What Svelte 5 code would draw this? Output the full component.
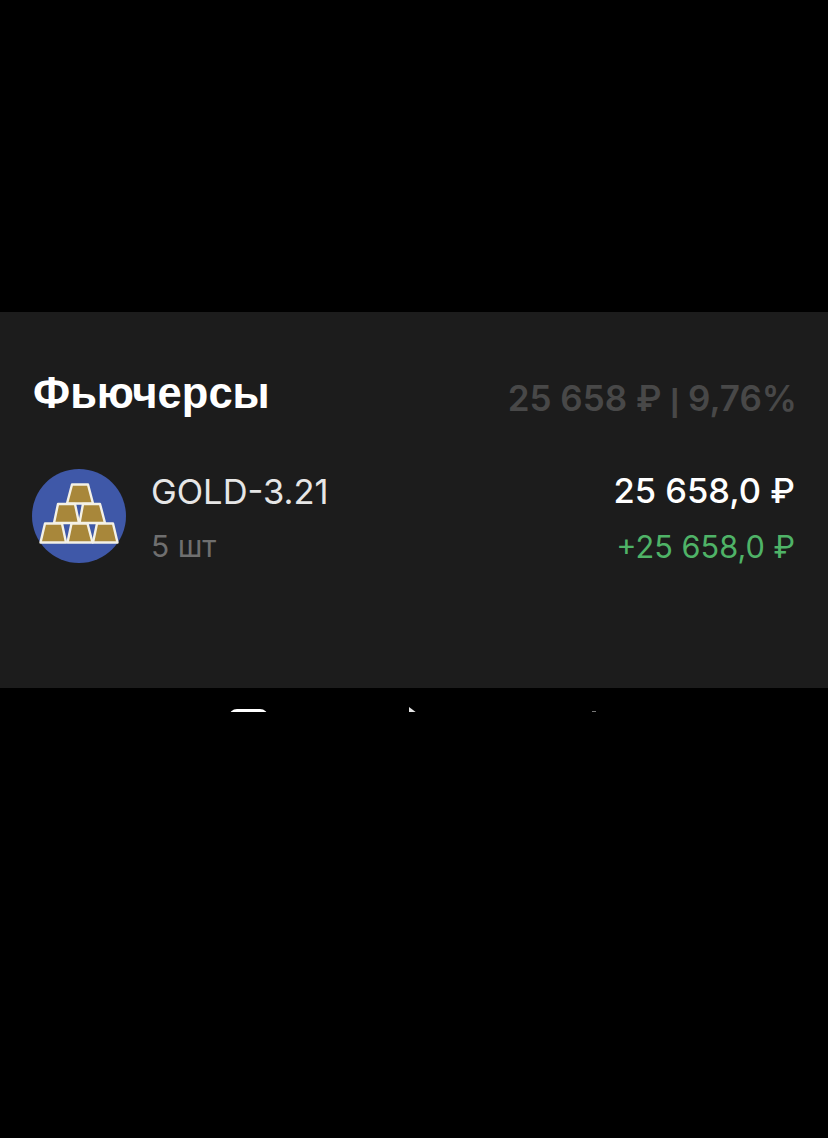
<script>
	const position = {
		ticker: 'GOLD-3.21',
		amount: '5 шт',
		value: '25 658,0 ₽',
		profit: '+25 658,0 ₽'
	};
</script>

<div class="screen">
	<section class="panel">
		<header class="head">
			<h2>Фьючерсы</h2>
			<span class="total">25 658 ₽ <span class="pipe">|</span> 9,76%</span>
		</header>
		<div class="row">
			<svg class="logo" viewBox="0 0 94 94" aria-hidden="true">
				<circle cx="47" cy="47" r="47" fill="#3f58a8" />
				<g fill="#a8873a" stroke="#f4f1e6" stroke-width="2.4" stroke-linejoin="round">
					<path d="M40 15.500 H56 L61 34.500 H35 Z" />
					<path d="M26 35 H43 L47 54 H22 Z" />
					<path d="M51 35 H68 L73 54 H47.500 Z" />
					<path d="M13 54.500 H30 L34 73.500 H8.500 Z" />
					<path d="M39.500 54.500 H55.500 L60.500 73.500 H35.500 Z" />
					<path d="M65 54.500 H81 L85.500 73.500 H61 Z" />
				</g>
			</svg>
			<div class="info">
				<div class="ticker">{position.ticker}</div>
				<div class="amount">{position.amount}</div>
			</div>
			<div class="values">
				<div class="value">{position.value}</div>
				<div class="profit">{position.profit}</div>
			</div>
		</div>
	</section>
	<nav class="tabs" aria-hidden="true">
		<span class="tab-bar"></span>
		<span class="tab-tip"></span>
		<span class="tab-dot"></span>
	</nav>
</div>

<style>
	:global(body) {
		background: #000;
	}
	.screen {
		height: 1138px;
		padding-top: 312px;
		box-sizing: border-box;
		background: #000;
		font-family: Inter, 'Liberation Sans', sans-serif;
		overflow: hidden;
	}
	.panel {
		height: 376px;
		box-sizing: border-box;
		padding: 63px 33px 0 32px;
		background: #1c1c1c;
	}
	.head {
		display: flex;
		justify-content: space-between;
		align-items: center;
		height: 40px;
	}
	h2 {
		margin: -3px 0 0 1px;
		font-family: 'Liberation Sans', sans-serif;
		font-size: 43.500px;
		font-weight: 700;
		color: #fff;
	}
	.total {
		font-size: 35px;
		font-weight: 600;
		color: #484848;
		margin: 6px -2px 0 0;
		white-space: nowrap;
	}
	.pipe {
		font-family: 'Liberation Sans', sans-serif;
		font-weight: 700;
		font-size: 32px;
	}
	.row {
		display: flex;
		align-items: flex-start;
		margin-top: 52px;
	}
	.logo {
		width: 94px;
		height: 94px;
		flex: none;
		margin-top: 2px;
	}
	.info {
		margin: 1px 0 0 25px;
		flex: 1;
	}
	.ticker {
		font-size: 34.500px;
		line-height: 44px;
		margin-top: 2px;
		color: #e6e6e6;
	}
	.amount {
		margin-top: 10px;
		font-size: 30px;
		line-height: 44px;
		color: #6f6f6f;
	}
	.values {
		text-align: right;
	}
	.value {
		font-size: 34.500px;
		font-weight: 500;
		line-height: 44px;
		margin-top: 2px;
		color: #fff;
	}
	.profit {
		margin-top: 12px;
		font-size: 30.700px;
		line-height: 44px;
		color: #4fb367;
	}
	.tabs {
		display: flex;
		align-items: flex-start;
		height: 24px;
		overflow: hidden;
		padding-left: 229px;
		box-sizing: border-box;
	}
	.tab-bar {
		width: 39px;
		height: 20px;
		margin-top: 21px;
		background: #fff;
		border-radius: 8px 8px 0 0;
	}
	.tab-tip {
		width: 0;
		height: 0;
		margin: 19px 0 0 141px;
		border-left: 8px solid #e6e6e6;
		border-top: 6px solid transparent;
	}
	.tab-dot {
		width: 4px;
		height: 1px;
		margin: 23px 0 0 175px;
		background: #777;
	}
</style>
